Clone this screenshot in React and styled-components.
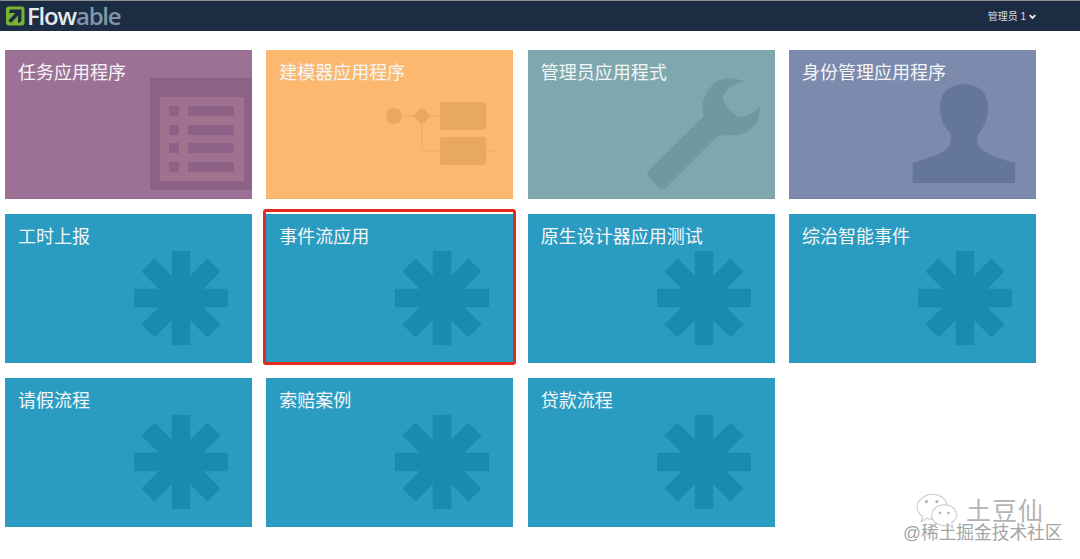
import React from "react";
import styled, { createGlobalStyle } from "styled-components";

const Global = createGlobalStyle`
  html, body { margin: 0; padding: 0; background: #fff; overflow: hidden; }
  body { font-family: "Liberation Sans", "Noto Sans CJK SC", sans-serif; }
`;

const Page = styled.div`
  position: relative;
  width: 1080px;
  height: 559px;
  background: #fff;
  overflow: hidden;
`;

const Navbar = styled.header`
  height: 30px;
  border-top: 1px solid #8c8f92;
  background: linear-gradient(#1a2b42, #1d2e44);
  display: flex;
  align-items: center;
  justify-content: space-between;
  padding: 0 44px 0 6px;
`;

const Brand = styled.div`
  display: flex;
  align-items: center;
  gap: 2px;
`;

const Wordmark = styled.span`
  font-family: "Open Sans", sans-serif;
  font-weight: 600;
  font-size: 24px;
  line-height: 30px;
  letter-spacing: -1.2px;
  color: #e6eaec;
`;

const WordmarkEnd = styled.span`
  color: #7f96a8;
`;

const UserMenu = styled.div`
  display: flex;
  align-items: center;
  gap: 3px;
  font-size: 10px;
  line-height: 14px;
  padding-top: 2px;
  color: #d8dde2;
  font-family: "Liberation Sans", "Noto Sans CJK SC", sans-serif;
`;

const Grid = styled.main`
  display: grid;
  grid-template-columns: repeat(4, 247px);
  grid-auto-rows: 149px;
  column-gap: 14.33px;
  row-gap: 15px;
  padding: 19px 0 0 5px;
`;

const Card = styled.a`
  position: relative;
  display: block;
  overflow: visible;
  background: ${(p) => p.$bg};
  padding: 10px 14px;
  box-shadow: inset 0 -1px 0 rgba(0, 0, 0, 0.05);
`;

const Title = styled.h3`
  position: relative;
  margin: 0 0 0 -1px;
  font-family: "Noto Sans CJK SC", sans-serif;
  font-weight: 400;
  font-size: 18px;
  line-height: 22px;
  color: #f4f6f8;
`;

const Art = styled.svg`
  position: absolute;
  left: 0;
  top: 0;
  width: 100%;
  height: 100%;
`;

const Highlight = styled.div`
  position: absolute;
  top: -5px;
  left: -3px;
  right: -3px;
  bottom: -2px;
  border: 3px solid #e32a1e;
  border-radius: 3px;
  pointer-events: none;
`;

const Watermark = styled.div`
  position: absolute;
  left: 903px;
  top: 490px;
  width: 170px;
  height: 60px;
  color: #a9a9a9;
`;

const MarkName = styled.div`
  position: absolute;
  left: 63px;
  top: 6px;
  font-family: "Noto Sans CJK SC", sans-serif;
  font-size: 25px;
  line-height: 26px;
  letter-spacing: 1px;
  color: #b4b4b4;
  white-space: nowrap;
`;

const MarkLine = styled.div`
  position: absolute;
  left: 0;
  top: 32px;
  font-family: "Liberation Sans", "Noto Sans CJK SC", sans-serif;
  font-size: 17.7px;
  line-height: 22px;
  color: #a4a4a4;
  text-shadow: 0 0 1px #fff;
  white-space: nowrap;
`;

const MarkIcon = styled.svg`
  position: absolute;
  left: 12px;
  top: 2px;
  width: 46px;
  height: 38px;
`;

const VB = "0 0 247 149";

const TaskArt = () => (
  <Art viewBox={VB}>
    <path fill="#8d6286" d="M145 28h102v112H145z" />
    <path fill="#a0728f" d="M155 47h84v84h-84z" />
    <g fill="#8d6286">
      {[56, 75, 93, 112].map((y) => (
        <g key={y}>
          <rect x="164" y={y} width="10" height="10" />
          <rect x="183" y={y} width="46" height="10" />
        </g>
      ))}
    </g>
  </Art>
);

const BuilderArt = () => (
  <Art viewBox={VB}>
    <g stroke="#ecaa62" strokeWidth="1" fill="none">
      <path d="M128 66h46M156 66v35h18M220 101h10" />
    </g>
    <circle cx="128" cy="66" r="8" fill="#e8a85f" />
    <path fill="#e8a85f" d="M156 57.500l8.500 8.500-8.500 8.500-8.500-8.500z" />
    <rect x="174" y="52" width="46" height="28" rx="3" fill="#e8a85f" />
    <rect x="174" y="87" width="46" height="28" rx="3" fill="#e8a85f" />
  </Art>
);

const WrenchArt = () => (
  <Art viewBox={VB}>
    <path
      fill="#6f99a1"
      d="M217 31.700C209 33 200 37 195.300 45C194 50 197 54 200.300 58.300L210.300 67.300C217 67 226 63 232 56.700C232 66 229 73 225.300 76.700C219 83 212 85 205.300 85C199 85 193 85 188.700 86.700L138.700 136.700C136 139.500 133.500 140 131 138L120.300 126.500C118.500 124 119 122 121 120L175.300 66.700C174 58 174 52 177 46.700C181 37 187 32 192 30C201 27.500 210 28.500 217 31.700Z"
    />
  </Art>
);

const PersonArt = () => (
  <Art viewBox={VB}>
    <path
      fill="#64779a"
      d="M175 34.300C190 34.300 199 43 199 57C199 69 195 77 190 83C187.500 88 187.500 92 191 98C200 106 215 110 226 113V133H123.700V113C136 109 150 105 158 99C162 93 163 88 161 83C155 77 151 69 151 57C151 43 160 34.300 175 34.300Z"
    />
  </Art>
);

const StarArt = () => (
  <Art viewBox={VB}>
    <g stroke="#1a8bb0" strokeWidth="18.500" fill="none">
      <path d="M176 37v94M129 84h94M143 51l66 66M209 51l-66 66" />
    </g>
  </Art>
);

const BLUE = "#2a9cc1";

const apps = [
  { title: "任务应用程序", bg: "#9d7095", Art: TaskArt },
  { title: "建模器应用程序", bg: "#fbb86e", Art: BuilderArt },
  { title: "管理员应用程式", bg: "#7ea8ae", Art: WrenchArt },
  { title: "身份管理应用程序", bg: "#7b8aad", Art: PersonArt },
  { title: "工时上报", bg: BLUE, Art: StarArt },
  { title: "事件流应用", bg: BLUE, Art: StarArt, marked: true },
  { title: "原生设计器应用测试", bg: BLUE, Art: StarArt },
  { title: "综治智能事件", bg: BLUE, Art: StarArt },
  { title: "请假流程", bg: BLUE, Art: StarArt },
  { title: "索赔案例", bg: BLUE, Art: StarArt },
  { title: "贷款流程", bg: BLUE, Art: StarArt },
];

export default function App() {
  return (
    <Page>
      <Global />
      <Navbar>
        <Brand>
          <svg width="19" height="20" viewBox="0 0 19 20">
            <rect x="0" y="0.500" width="18.500" height="19" rx="3" fill="#7ab32e" />
            <path fill="#1b2c42" d="M4 3.500h11.500v11.500l-3.500 2.500V9.500L5 17 2.500 14.500 9.500 7H3z" />
          </svg>
          <Wordmark>
            Flow<WordmarkEnd>able</WordmarkEnd>
          </Wordmark>
        </Brand>
        <UserMenu>
          <span>管理员 1</span>
          <svg width="7" height="6" viewBox="0 0 7 6">
            <path d="M0.700 1.200l2.800 2.800 2.800-2.800" stroke="#eef0f2" strokeWidth="1.800" fill="none" />
          </svg>
        </UserMenu>
      </Navbar>
      <Grid>
        {apps.map(({ title, bg, Art: CardArt, marked }) => (
          <Card key={title} $bg={bg}>
            <CardArt />
            <Title>{title}</Title>
            {marked && <Highlight />}
          </Card>
        ))}
      </Grid>
      <Watermark>
        <MarkIcon viewBox="0 0 44 36">
          <g fill="#fff" stroke="#c9c9c9" strokeWidth="1">
            <path d="M17 2C9 2 2 8 2 14c0 4 2 7 5 9l-1 5 5-3c2 1 4 1 6 1 8 0 14-6 14-12S25 2 17 2z" />
            <path d="M28 12c-7 0-12 5-12 10s5 10 12 10c2 0 3 0 4-1l4 3-1-5c3-2 5-4 5-7 0-5-5-10-12-10z" />
          </g>
          <g fill="#b4b4b4">
            <circle cx="11" cy="9" r="1.500" />
            <circle cx="21" cy="9" r="1.500" />
            <circle cx="24" cy="20" r="1.300" />
            <circle cx="32" cy="20" r="1.300" />
          </g>
        </MarkIcon>
        <MarkName>土豆仙</MarkName>
        <MarkLine>@稀土掘金技术社区</MarkLine>
      </Watermark>
    </Page>
  );
}
